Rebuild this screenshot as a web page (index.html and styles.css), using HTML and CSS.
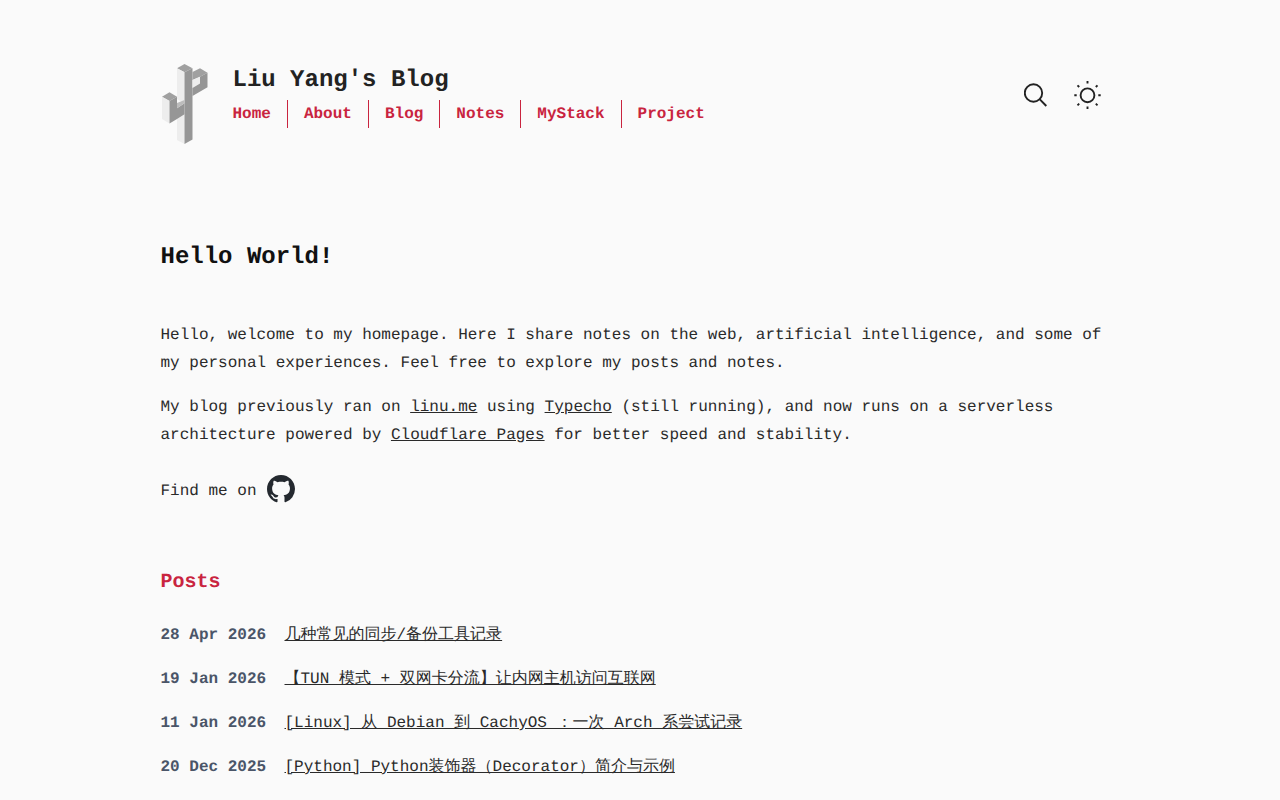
FILE: index.html
```html
<!DOCTYPE html>
<html lang="en">
<head>
    <meta charset="UTF-8" />
    <meta name="viewport" content="width=device-width, initial-scale=1.0" />
    <title>Liu Yang's Blog</title>
    <link rel="stylesheet" href="styles.css">
</head>
<body>
    <div class="container">

        <!-- Header -->
        <header class="site-header">
            <svg class="logo" width="50" height="82" viewBox="161.5 63 50 82" aria-hidden="true">
                <polygon fill="#a0a0a0" points="177.5,68.3 185,64 193,68.3 185,72.3"/>
                <polygon fill="#ededed" points="177.5,68.3 185,72.3 185,103.3 177.5,99"/>
                <polygon fill="#ededed" points="177.5,119 185,114.3 185,144 177.5,140"/>
                <polygon fill="#969696" points="185,72.3 193,68.3 193,139.5 185,144"/>
                <polygon fill="#a0a0a0" points="162.5,96.7 170,92.3 177.5,96.7 170,101"/>
                <polygon fill="#ededed" points="162.5,96.7 170,101 170,123.5 162.5,119"/>
                <polygon fill="#969696" points="170,101 177.5,96.7 177.5,108.3 185,103.3 185,114.3 177.5,119 170,123.5"/>
                <polygon fill="#bcbcbc" points="177.5,103 185,100 185,103.3 177.5,108.3"/>
                <polygon fill="#a0a0a0" points="193,72 200.5,68.3 208,72.7 200.5,76.7 193,80"/>
                <polygon fill="#ededed" points="193,80 200.5,76.7 200.5,83.5 193,88"/>
                <polygon fill="#969696" points="200.5,76.7 208,72.7 208,87.3 193,96 193,88 200.5,83.5"/>
            </svg>
            <div class="brand">
                <a class="site-title" href="#">Liu Yang's Blog</a>
                <nav class="main-nav">
                    <a href="#">Home</a>
                    <a href="#">About</a>
                    <a href="#">Blog</a>
                    <a href="#">Notes</a>
                    <a href="#">MyStack</a>
                    <a href="#">Project</a>
                </nav>
            </div>
            <div class="header-tools">
                <svg width="26" height="26" viewBox="0 0 26 26" fill="none" stroke="#222" stroke-width="1.900" aria-label="Search">
                    <circle cx="9.500" cy="11" r="8.700"/>
                    <line x1="15.600" y1="17.200" x2="22.300" y2="24"/>
                </svg>
                <svg width="28" height="28" viewBox="0 0 28 28" fill="none" stroke="#222" stroke-width="1.900" aria-label="Theme">
                    <circle cx="13.500" cy="14.300" r="6.900"/>
                    <path d="M13.500 0v2.400M13.500 25.600v2.400M0.300 14.300h2.400M24.300 14.300h2.400M3.500 4.300l1.700 1.700M21.800 22.600l1.700 1.700M3.500 24.300l1.700-1.700M21.800 6l1.700-1.700"/>
                </svg>
            </div>
        </header>

        <main>
            <h1>Hello World!</h1>

            <div class="intro">
                <p>Hello, welcome to my homepage. Here I share notes on the web, artificial intelligence, and some of my personal experiences. Feel free to explore my posts and notes.</p>
                <p>My blog previously ran on <a href="#">linu.me</a> using <a href="#">Typecho</a> (still running), and now runs on a serverless architecture powered by <a href="#">Cloudflare Pages</a> for better speed and stability.</p>
                <p class="find-me">Find me on
                    <svg class="github-icon" width="28" height="28" viewBox="0 0 16 16" fill="#24292f" aria-label="GitHub">
                        <path d="M8 0C3.58 0 0 3.580 0 8c0 3.540 2.290 6.530 5.470 7.590.4.070.550-.170.550-.380 0-.190-.010-.820-.010-1.490-2.010.370-2.530-.490-2.690-.940-.090-.230-.480-.940-.820-1.130-.280-.150-.680-.520-.010-.530.630-.010 1.080.580 1.230.820.720 1.210 1.870.870 2.330.660.070-.520.280-.870.510-1.070-1.780-.2-3.640-.890-3.640-3.950 0-.870.310-1.590.820-2.150-.080-.2-.360-1.020.080-2.120 0 0 .670-.210 2.200.820.640-.180 1.320-.270 2-.270.680 0 1.360.090 2 .270 1.530-1.040 2.200-.820 2.200-.820.440 1.100.160 1.920.080 2.120.510.560.820 1.270.820 2.150 0 3.070-1.870 3.750-3.650 3.950.290.250.540.730.540 1.480 0 1.070-.010 1.930-.010 2.200 0 .210.150.460.550.380A8.013 8.013 0 0016 8c0-4.420-3.580-8-8-8z"/>
                    </svg>
                </p>
            </div>

            <section class="posts">
                <h2>Posts</h2>
                <ul class="post-list">
                    <li><span class="post-date">28 Apr 2026</span><a href="#">几种常见的同步/备份工具记录</a></li>
                    <li><span class="post-date">19 Jan 2026</span><a href="#">【TUN 模式 + 双网卡分流】让内网主机访问互联网</a></li>
                    <li><span class="post-date">11 Jan 2026</span><a href="#">[Linux] 从 Debian 到 CachyOS ：一次 Arch 系尝试记录</a></li>
                    <li><span class="post-date">20 Dec 2025</span><a href="#">[Python] Python装饰器（Decorator）简介与示例</a></li>
                </ul>
            </section>
        </main>
    </div>
</body>
</html>
```

FILE: styles.css
```css
:root {
    --bg: #fafafa;
    --text: #2a2a2a;
    --heading: #111;
    --accent: #c9243f;
    --muted: #4a5568;
}

body {
    margin: 0;
    background-color: var(--bg);
    color: var(--text);
    font-family: "Liberation Mono", monospace;
    font-size: 16px;
    line-height: 28px;
    text-rendering: geometricPrecision;
}

a {
    color: inherit;
}

.container {
    max-width: 959px;
    margin: 0 auto;
    padding-top: 64px;
}

/* Header */
.site-header {
    display: flex;
    align-items: flex-start;
    height: 80px;
}

.logo {
    flex: none;
    margin-top: -1px;
    margin-right: 22px;
}

.brand {
    flex: 1;
    padding-top: 1px;
}

.site-title {
    display: block;
    color: #222;
    font-size: 24px;
    font-weight: 700;
    line-height: 32px;
    height: 35px;
    text-decoration: none;
}

.main-nav {
    display: flex;
}

.main-nav a {
    color: var(--accent);
    font-weight: 700;
    text-decoration: none;
    padding-right: 16px;
    margin-right: 16px;
    border-right: 1px solid var(--accent);
}

.main-nav a:last-child {
    border-right: none;
}

.header-tools {
    display: flex;
    align-items: center;
    gap: 24px;
    margin-top: 17px;
    margin-right: 18px;
}

/* Main */
h1 {
    margin: 83px 0 0;
    color: var(--heading);
    font-size: 24px;
    line-height: 62px;
    font-weight: 700;
}

.intro {
    margin-top: 32px;
}

.intro p {
    margin: 0 0 16px;
}

.find-me {
    display: flex;
    align-items: center;
    gap: 10px;
    height: 42px;
    padding-top: 5px;
}

.github-icon {
    margin-top: -4px;
}

.posts h2 {
    margin: 57px 0 0;
    color: var(--accent);
    font-size: 20px;
    line-height: 28px;
    font-weight: 700;
}

.post-list {
    list-style: none;
    margin: 24px 0 0;
    padding: 0;
}

.post-list li {
    margin-bottom: 16px;
}

.post-date {
    display: inline-block;
    width: 124px;
    color: var(--muted);
    font-weight: 700;
}
```
